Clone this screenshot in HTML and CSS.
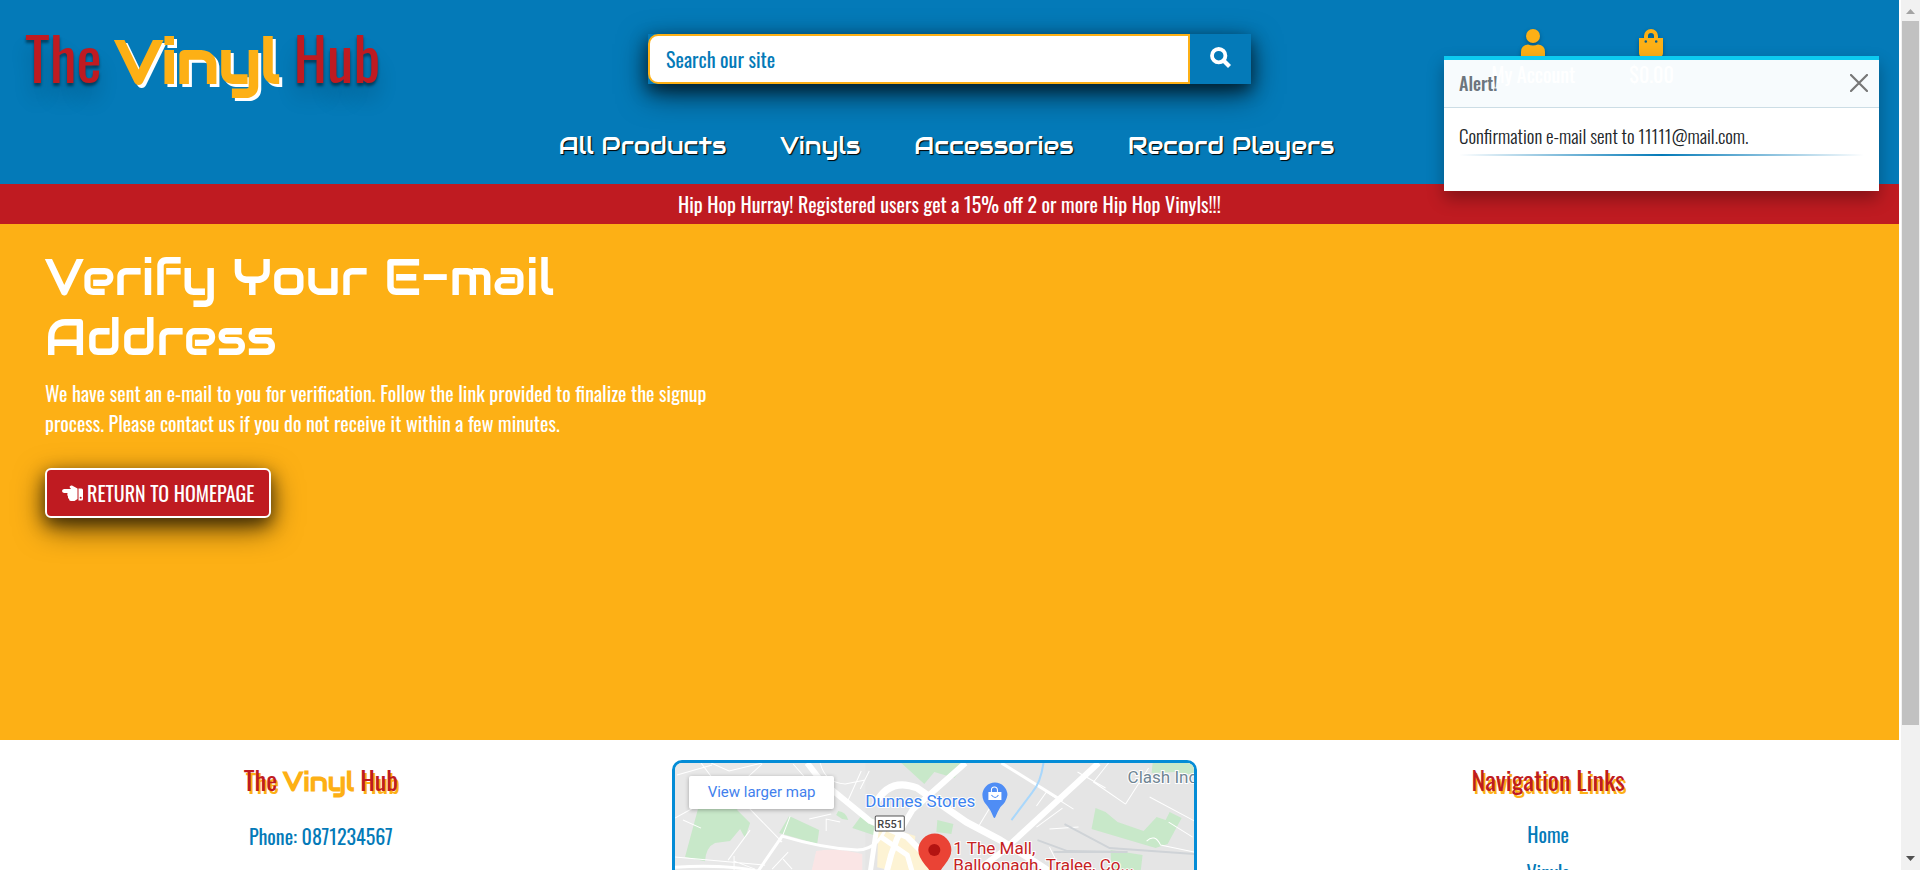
FILE: index.html
```html
<!DOCTYPE html>
<html lang="en">
<head>
<meta charset="utf-8">
<title>The Vinyl Hub</title>
<link rel="stylesheet" href="styles.css">
</head>
<body>
<div class="page">
  <header class="header">
    <div class="top">
      <a class="logo" href="#">The <span class="logo-vinyl">Vinyl</span> Hub</a>
      <form class="search">
        <input class="search-input" type="text" placeholder="Search our site" aria-label="Search our site">
        <button class="search-button" type="button" aria-label="Search">
          <svg width="21" height="21" viewBox="0 0 21 21"><circle cx="8.7" cy="8.7" r="6.7" fill="none" stroke="#fff" stroke-width="3.8"/><path d="M13.5 13.500l6 6" stroke="#fff" stroke-width="4.200"/></svg>
        </button>
      </form>
      <div class="tools">
        <a class="tool" href="#">
          <svg width="24" height="28" viewBox="0 0 24 28" fill="#fdb015"><circle cx="12" cy="7" r="7"/><path d="M0 28v-5q0-7 7-7.500q5 2 10 0q7 .5 7 7.500v5z"/></svg>
          <span>My Account</span>
        </a>
        <a class="tool" href="#">
          <svg width="24" height="28" viewBox="0 0 24 28" fill="#fdb015"><path fill-rule="evenodd" d="M0 9h5V7a7 7 0 0 1 14 0v2h5v15q0 4-4 4H4q-4 0-4-4zM9 9h6V7a3 3 0 0 0-6 0zM5.500 12.500a1.300 1.300 0 1 0 2.600 0a1.300 1.300 0 1 0-2.600 0zM15.900 12.500a1.300 1.300 0 1 0 2.600 0a1.300 1.300 0 1 0-2.600 0z"/></svg>
          <span>$0.00</span>
        </a>
      </div>
    </div>
    <nav class="nav">
      <a href="#">All Products</a>
      <a href="#">Vinyls</a>
      <a href="#">Accessories</a>
      <a href="#">Record Players</a>
    </nav>
  </header>
  <div class="promo">Hip Hop Hurray! Registered users get a 15% off 2 or more Hip Hop Vinyls!!!</div>
  <main class="main">
    <div class="verify">
      <h1>Verify Your E-mail Address</h1>
      <p>We have sent an e-mail to you for verification. Follow the link provided to finalize the signup process. Please contact us if you do not receive it within a few minutes.</p>
      <a class="home-button" href="#">
        <svg width="21" height="17" viewBox="0 0 21 17" fill="#fff"><path d="M2 4h7L7.500 2Q8 0 10 .5l5.500 3V14l-3 2H9q-2 0-2-2q-1.500-1-1-2.500Q4.800 10 5.500 8H2Q0 7.500 0 6t2-2zM16.500 3.500h3q1.500 0 1.500 1.500v9q0 1.500-1.500 1.500h-3z"/><circle cx="18.700" cy="12.700" r="1" fill="#bf1b21"/></svg>
        <span>RETURN TO HOMEPAGE</span>
      </a>
    </div>
  </main>
  <footer class="footer">
    <section class="footer-col">
      <h2>The <span class="footer-vinyl">Vinyl</span> Hub</h2>
      <p>Phone: 0871234567</p>
    </section>
    <section class="map">
      <svg class="map-canvas" viewBox="0 0 519 200" preserveAspectRatio="xMidYMin slice" role="img" aria-label="Map">
        <rect width="519" height="200" fill="#e8e8e8"/>
        <path d="M190 0h329v200H190z" fill="#e3e3e3" opacity=".6"/>
        <g fill="#c8e8c9">
          <path d="M24 42L10 94l20 4q1-14 10-18l15-2 10-12 5 9 5-15-13-13 6-12z"/>
          <path d="M114 53l30 14-2 14-38-11z"/>
          <path d="M188 50l25 15-12 8-24-8z"/>
          <path d="M163 48q8 1 10 9l-6-1-6-4z"/>
          <path d="M262 57l16 4-2 10-15-2zM226 0h64l-11 15-20-6-10 12zM420 45l10 4 12 10 26 9 13-14 9 3 4-8 12 6-14 26-12 4-64-19zM435 87l32 5-3 25-28-3zM477 0h42v12l-20-3-23 1z"/>
        </g>
        <path d="M141 88q20-4 46 3v109h-72z" fill="#fae5e5"/>
        <path d="M203 61l37 12-3 40-35-9z" fill="#fdf3d4"/>
        <path d="M228 72l20 13 16 32-28-4z" fill="#fdf3d4"/>
        <g fill="none" stroke="#fff" stroke-width="1">
          <path d="M2 12l35-10M36 0l18 8 33-8M87 1l-21 19M38 16L26 0M118 1l22 25M145 0q5 20 25 21l20-4M173 37l13-29M194 8l-9 18M226 22l16 5M0 55l20-11M8 57l18 8M73 44l34 35M105 79l10-26M75 67l-22 30M0 94l90 8M59 93v23M80 106l-21-8M97 106l16-17M108 96l9 10M151 68v-12l14 3M134 56l22-5"/>
          <path d="M321 34l-17 28M361 43l10-14 27 17M361 64l26-19M374 66l29-2M402 9l28 16M433 0l-15 19 32 22M450 41l23-36M471 78q8-8 14 4l34 7M474 34l45 24M493 59l24 15M374 84l10 20"/>
        </g>
        <g fill="none" stroke="#fff" stroke-linejoin="round">
          <path d="M0 104q50-3 83 4l24-35q40 12 75 14 24-1 32-32" stroke-width="3"/>
          <path d="M132 0l14 18 49 40 37 16 23 23" stroke-width="6"/>
          <path d="M290 0l-53 47q-21 32-27 70" stroke-width="6"/>
          <path d="M200 41q14-27 42-16l49 34 34 18 27 17 35 23" stroke-width="7"/>
          <path d="M423 0l-98 90-38 28" stroke-width="6"/>
          <path d="M326 0l61 38" stroke-width="3"/>
          <path d="M202 61l-8 55M206 74l26 18 7 24" stroke-width="5"/>
        </g>
        <path d="M368 0q-3 20-11 29l-21 28" fill="none" stroke="#a9d7fb" stroke-width="2"/>
        <g fill="none" stroke="#cfd3d7" stroke-width="2"><path d="M389 61l45 24 85 6M362 77l30 11 60 1M378 89h60"/></g>
        <rect x="200" y="53" width="29" height="15" rx="1" fill="#fff" stroke="#555"/>
        <text class="map-road" x="202" y="65">R551</text>
        <text class="map-shop" x="190" y="44">Dunnes Stores</text>
        <text class="map-area" x="452" y="20">Clash Ind</text>
        <path d="M307 32a12 12 0 1 1 25 0q-1 7-7 12-3 5-5 10-1 2-2 0-2-6-6-11-5-5-5-11z" fill="#4f8df5"/>
        <path d="M313 29h13v8h-13z" fill="#fff"/><path d="M316 29v-2a3 3 0 0 1 6 0v2" fill="none" stroke="#fff"/><path d="M316 32q4 5 7 0" fill="none" stroke="#4f8df5"/>
        <path d="M243 87a16 16 0 1 1 33 0q0 7-7 15-6 7-8 18h-3q-1-11-8-18-7-8-7-15z" fill="#ea4335"/><circle cx="259" cy="87" r="6" fill="#b31412"/>
        <text class="map-place" x="278" y="91">1 The Mall,</text>
        <text class="map-place" x="278" y="108">Balloonagh, Tralee, Co...</text>
      </svg>
      <a class="map-link" href="#">View larger map</a>
    </section>
    <section class="footer-col">
      <h2>Navigation Links</h2>
      <ul>
        <li><a href="#">Home</a></li>
        <li><a href="#">Vinyls</a></li>
      </ul>
    </section>
  </footer>
</div>
<div class="toast" role="alert">
  <div class="toast-header">
    <strong>Alert!</strong>
    <button class="toast-close" type="button" aria-label="Close">
      <svg width="18" height="18" viewBox="0 0 18 18"><path d="M1 1l16 16M17 1L1 17" stroke="#777" stroke-width="2.200" stroke-linecap="round"/></svg>
    </button>
  </div>
  <div class="toast-body">
    <p>Confirmation e-mail sent to 11111@mail.com.</p>
    <hr>
  </div>
</div>
<div class="scrollbar" aria-hidden="true">
  <svg width="9" height="5" viewBox="0 0 9 5"><path d="M0 5L4.500 0 9 5z" fill="#a3a3a3"/></svg>
  <div class="track"><div class="thumb"></div></div>
  <svg width="9" height="5" viewBox="0 0 9 5"><path d="M0 0h9L4.500 5z" fill="#505050"/></svg>
</div>
</body>
</html>
```
FILE: styles.css
```css
* { box-sizing: border-box; }

body {
  margin: 0;
  height: 100vh;
  overflow: hidden;
  background: #fff;
  font-family: Oswald, "Liberation Sans", sans-serif;
  font-size: 20px;
  line-height: 30px;
}

a { color: inherit; text-decoration: none; }
p, h1, h2, ul { margin: 0; padding: 0; }
h1, h2 { font-weight: normal; }
ul { list-style: none; }

.page {
  height: 100vh;
  margin-right: 21px;
  overflow: hidden;
}

.header { background: #047ab8; color: #fff; }

.top {
  display: grid;
  grid-template-columns: repeat(3, 1fr);
  align-items: start;
  height: 120px;
}

.logo {
  padding: 18px 0 0 25px;
  color: #bf1b21;
  font-size: 60px;
  line-height: 76px;
  white-space: nowrap;
  text-shadow: 0 3px 3px rgba(0, 0, 0, .45), 0 16px 20px rgba(0, 0, 0, .2);
}

.logo-vinyl {
  color: #fdb015;
  font-family: Audiowide, "DejaVu Sans", sans-serif;
  font-weight: bold;
  text-shadow: 3px 3px 0 #fff;
}

.search {
  display: flex;
  height: 50px;
  margin: 34px 15px 0;
  box-shadow: 0 10px 30px rgba(0, 0, 0, .6), 0 6px 16px rgba(0, 0, 0, .5);
}

.search-input {
  flex: 1;
  min-width: 0;
  padding: 0 16px;
  border: 2px solid #fdb015;
  border-radius: 10px 0 0 10px;
  background: #fff;
  color: #047ab8;
  font: inherit;
}

.search-input::placeholder { color: #047ab8; opacity: 1; }

.search-button {
  width: 61px;
  padding: 0;
  border: 0;
  background: #047ab8;
}

.tools {
  display: flex;
  justify-content: center;
  gap: 54px;
  padding: 29px 0 0;
}

.tool {
  display: flex;
  flex-direction: column;
  align-items: center;
  gap: 2px;
}

.tool svg { filter: drop-shadow(0 2px 2px rgba(0, 0, 0, .3)); }

.nav {
  display: flex;
  justify-content: center;
  gap: 54px;
  height: 64px;
  padding: 10px 6px 0 0;
  font: 24px/32px Audiowide, "DejaVu Sans", sans-serif;
  text-shadow: 1px 1px 1px #000;
}

.promo {
  padding: 5px 0;
  background: #bf1b21;
  color: #fff;
  text-align: center;
}

.main {
  min-height: 516px;
  padding: 24px 45px;
  background: #fdb015;
  color: #fff;
}

.verify { max-width: 690px; }

.verify h1 {
  margin-bottom: 10px;
  font: 50px/60px Audiowide, "DejaVu Sans", sans-serif;
}

.home-button {
  display: inline-flex;
  align-items: center;
  gap: 4px;
  height: 50px;
  margin-top: 30px;
  padding: 0 15px;
  border: 2px solid #fff;
  border-radius: 6px;
  background: #bf1b21;
  box-shadow: 0 10px 30px rgba(0, 0, 0, .6), 0 6px 16px rgba(0, 0, 0, .5);
}

.footer {
  display: grid;
  grid-template-columns: repeat(3, 1fr);
  padding: 20px 44px 0 14px;
  color: #047ab8;
}

.footer-col { text-align: center; }

.footer h2 {
  margin: 4px 0 23px;
  color: #bf1b21;
  font-size: 26px;
  line-height: 32px;
  text-shadow: 2px 3px 0 #fdb015;
}

.footer-vinyl {
  color: #fdb015;
  font-family: Audiowide, "DejaVu Sans", sans-serif;
  font-weight: bold;
  text-shadow: none;
}

.footer li { margin-bottom: 8px; }

.map {
  position: relative;
  margin: 0 44px;
  overflow: hidden;
  border: 3px solid #048cd6;
  border-radius: 10px;
}

.map-canvas { display: block; width: 100%; }

.map text {
  font-family: Roboto, sans-serif;
  stroke: #fff;
  stroke-width: 2px;
  paint-order: stroke;
}

.map .map-road { fill: #444; font-size: 11px; font-weight: 500; stroke: none; }
.map .map-shop { fill: #3b82f0; font-size: 17px; }
.map .map-area { fill: #6f8593; font-size: 17px; }
.map .map-place { fill: #c5221f; font-size: 17px; }

.map-link {
  position: absolute;
  top: 13px;
  left: 14px;
  padding: 0 19px;
  border-radius: 2px;
  background: #fff;
  box-shadow: 0 1px 4px rgba(0, 0, 0, .3);
  color: #427fed;
  font: 15px/33px Roboto, sans-serif;
}

.toast {
  position: absolute;
  top: 56px;
  right: 41px;
  width: 435px;
  border-top: 4px solid #0dcaf0;
  background: rgba(255, 255, 255, .97);
  box-shadow: 0 8px 16px rgba(0, 0, 0, .3);
  font-size: 18px;
}

.toast-header {
  display: flex;
  align-items: center;
  justify-content: space-between;
  height: 48px;
  padding: 0 11px 2px 15px;
  border-bottom: 1px solid #ccdde5;
  color: #6c757d;
}

.toast-header strong { font-weight: 500; }

.toast-close {
  display: flex;
  padding: 0;
  border: 0;
  background: none;
}

.toast-body {
  padding: 12px 15px 35px;
  background: #fff;
  color: #212529;
  font-size: 19px;
  font-weight: 300;
}

.toast-body hr {
  height: 2px;
  margin: 4px 0 0;
  border: 0;
  background: linear-gradient(to right, transparent, #047ab8, transparent);
}

.scrollbar {
  position: absolute;
  top: 0;
  right: 0;
  display: flex;
  flex-direction: column;
  align-items: center;
  justify-content: space-between;
  width: 19px;
  height: 100%;
  padding: 9px 0;
  background: #f1f1f1;
}

.track { flex: 1; margin: 7px 0; }
.thumb { width: 17px; height: 85%; background: #c1c1c1; }
```
